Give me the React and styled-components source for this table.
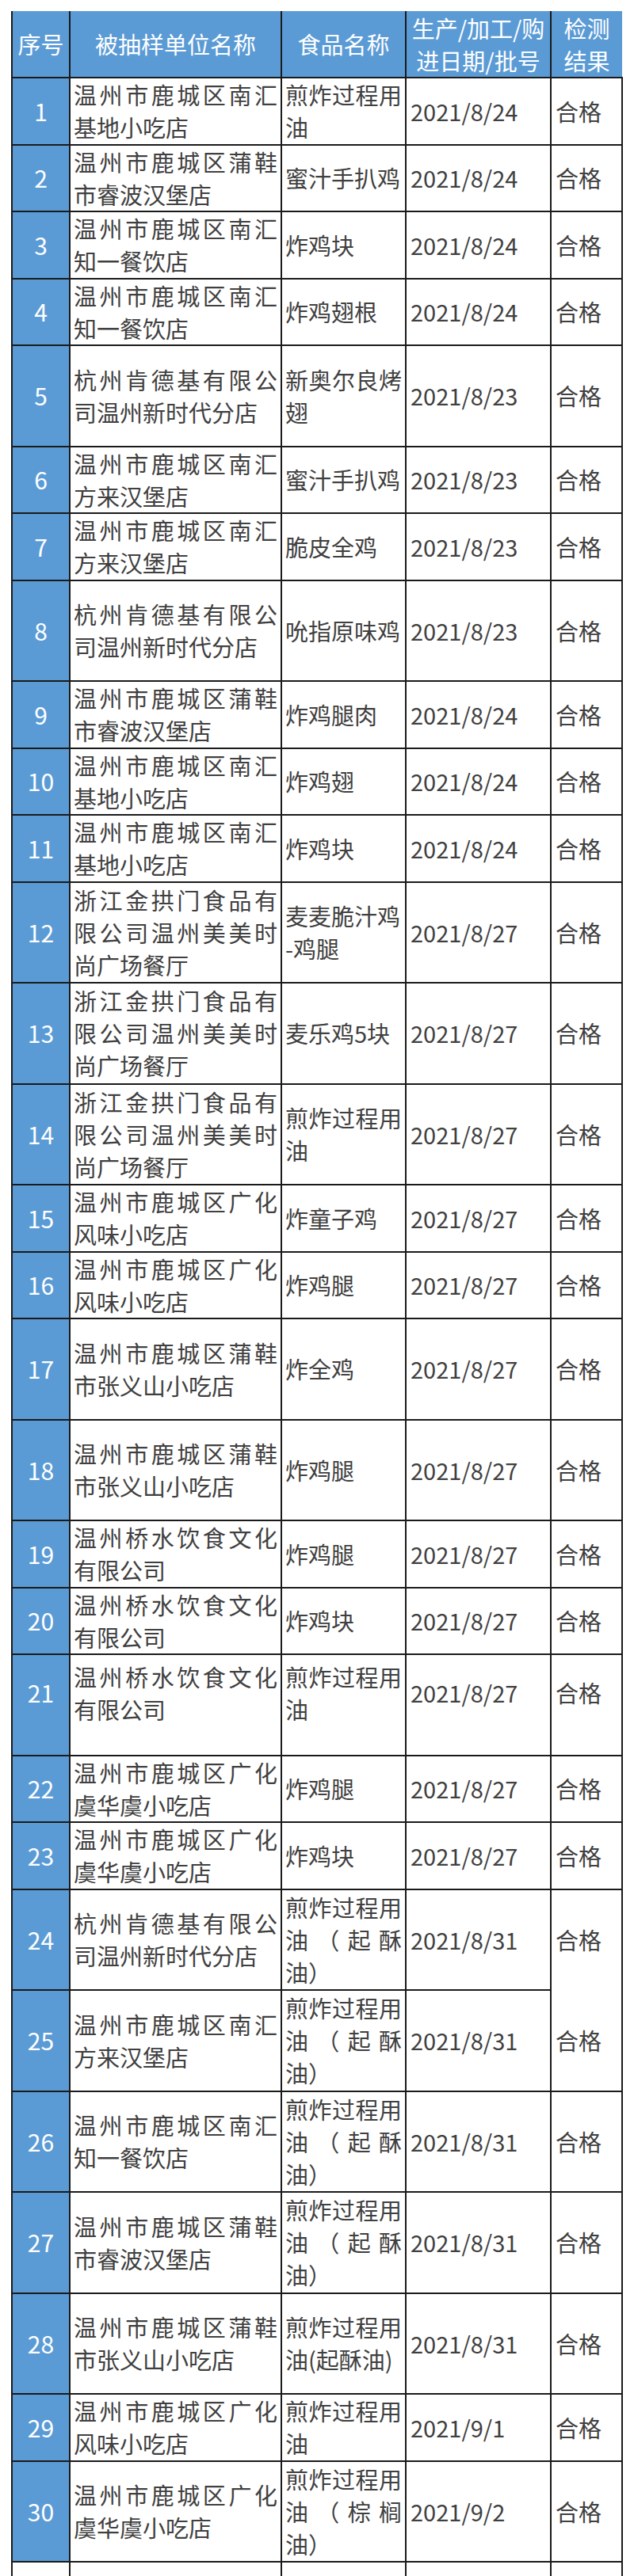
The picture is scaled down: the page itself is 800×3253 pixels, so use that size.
import React from "react";
import styled, { createGlobalStyle } from "styled-components";

const GlobalStyle = createGlobalStyle`
  body {
    margin: 0;
    background: #ffffff;
  }
`;

const LINE = "2px solid #1a1a1a";

const Page = styled.div`
  padding: 14px 0 0 14px;
  font-family: "Noto Sans CJK SC", "Noto Sans", sans-serif;
`;

const Table = styled.table`
  border-collapse: collapse;
  table-layout: fixed;
  width: 772px;
`;

const HeadCell = styled.th`
  background: #5b9bd5;
  color: #ffffff;
  font-weight: 400;
  font-size: 29px;
  line-height: 41px;
  text-align: center;
  vertical-align: middle;
  padding: 0 2px;
  height: 83px;
  border-left: ${LINE};
  border-bottom: ${LINE};
  border-top: none;
  border-right: ${({ $last }) => ($last ? "none" : LINE)};
`;

const Row = styled.tr`
  height: ${({ $tall }) => ($tall ? "127.5px" : "84.5px")};
`;

const Cell = styled.td`
  border: ${LINE};
  border-bottom: ${({ $openBottom }) => ($openBottom ? "none" : LINE)};
  border-top: ${({ $openTop }) => ($openTop ? "none" : LINE)};
  color: #404040;
  font-size: 29px;
  line-height: 41px;
  vertical-align: middle;
  padding: 0 4px 0 5px;
  padding-bottom: ${({ $raised }) => ($raised ? "30px" : "0")};
  word-break: break-all;
`;

const NumCell = styled(Cell)`
  background: #5b9bd5;
  color: #ffffff;
  text-align: center;
  font-size: 30px;
  padding: 0;
  padding-bottom: ${({ $raised }) => ($raised ? "30px" : "0")};
`;

// Excel "distributed" alignment: lines are stretched to the cell width
const TextCell = styled(Cell)`
  text-align: justify;
  text-align-last: left;
  padding: 0 4px 0 4px;
  padding-bottom: ${({ $raised }) => ($raised ? "30px" : "0")};
`;

const DateCell = styled(Cell)`
  white-space: nowrap;
  padding-left: 5px;
`;

const BlankRow = styled.tr`
  height: 40px;
`;

const BlankCell = styled.td`
  border-left: ${LINE};
  border-right: ${LINE};
  border-top: ${LINE};
`;

const CHIPS = "煎炸过程用油（起酥油）";

const rows = [
  ["温州市鹿城区南汇基地小吃店", "煎炸过程用油", "2021/8/24"],
  ["温州市鹿城区蒲鞋市睿波汉堡店", "蜜汁手扒鸡", "2021/8/24"],
  ["温州市鹿城区南汇知一餐饮店", "炸鸡块", "2021/8/24"],
  ["温州市鹿城区南汇知一餐饮店", "炸鸡翅根", "2021/8/24"],
  ["杭州肯德基有限公司温州新时代分店", "新奥尔良烤翅", "2021/8/23", true],
  ["温州市鹿城区南汇方来汉堡店", "蜜汁手扒鸡", "2021/8/23"],
  ["温州市鹿城区南汇方来汉堡店", "脆皮全鸡", "2021/8/23"],
  ["杭州肯德基有限公司温州新时代分店", "吮指原味鸡", "2021/8/23", true],
  ["温州市鹿城区蒲鞋市睿波汉堡店", "炸鸡腿肉", "2021/8/24"],
  ["温州市鹿城区南汇基地小吃店", "炸鸡翅", "2021/8/24"],
  ["温州市鹿城区南汇基地小吃店", "炸鸡块", "2021/8/24"],
  ["浙江金拱门食品有限公司温州美美时尚广场餐厅", ["麦麦脆汁鸡", "-鸡腿"], "2021/8/27", true],
  ["浙江金拱门食品有限公司温州美美时尚广场餐厅", "麦乐鸡5块", "2021/8/27", true],
  ["浙江金拱门食品有限公司温州美美时尚广场餐厅", "煎炸过程用油", "2021/8/27", true],
  ["温州市鹿城区广化风味小吃店", "炸童子鸡", "2021/8/27"],
  ["温州市鹿城区广化风味小吃店", "炸鸡腿", "2021/8/27"],
  ["温州市鹿城区蒲鞋市张义山小吃店", "炸全鸡", "2021/8/27", true],
  ["温州市鹿城区蒲鞋市张义山小吃店", "炸鸡腿", "2021/8/27", true],
  ["温州桥水饮食文化有限公司", "炸鸡腿", "2021/8/27"],
  ["温州桥水饮食文化有限公司", "炸鸡块", "2021/8/27"],
  ["温州桥水饮食文化有限公司", "煎炸过程用油", "2021/8/27", true, true],
  ["温州市鹿城区广化虞华虞小吃店", "炸鸡腿", "2021/8/27"],
  ["温州市鹿城区广化虞华虞小吃店", "炸鸡块", "2021/8/27"],
  ["杭州肯德基有限公司温州新时代分店", CHIPS, "2021/8/31", true],
  ["温州市鹿城区南汇方来汉堡店", CHIPS, "2021/8/31", true],
  ["温州市鹿城区南汇知一餐饮店", CHIPS, "2021/8/31", true],
  ["温州市鹿城区蒲鞋市睿波汉堡店", CHIPS, "2021/8/31", true],
  ["温州市鹿城区蒲鞋市张义山小吃店", "煎炸过程用油(起酥油)", "2021/8/31", true],
  ["温州市鹿城区广化风味小吃店", "煎炸过程用油", "2021/9/1"],
  ["温州市鹿城区广化虞华虞小吃店", "煎炸过程用油（棕榈油）", "2021/9/2", true],
];

const App = () => {
  return (
    <Page lang="zh-CN">
      <GlobalStyle />
      <Table>
        <colgroup>
          <col style={{ width: 73 }} />
          <col style={{ width: 267 }} />
          <col style={{ width: 157 }} />
          <col style={{ width: 183 }} />
          <col style={{ width: 90 }} />
        </colgroup>
        <thead>
          <tr>
            <HeadCell>序号</HeadCell>
            <HeadCell>被抽样单位名称</HeadCell>
            <HeadCell>食品名称</HeadCell>
            <HeadCell>
              生产/加工/购
              <br />
              进日期/批号
            </HeadCell>
            <HeadCell $last>
              检测
              <br />
              结果
            </HeadCell>
          </tr>
        </thead>
        <tbody>
          {rows.map(([unit, food, date, tall, raised], i) => (
            <Row key={i} $tall={tall}>
              <NumCell $raised={raised}>{i + 1}</NumCell>
              <TextCell $raised={raised}>{unit}</TextCell>
              <TextCell $raised={raised}>
                {Array.isArray(food) ? (
                  <>
                    {food[0]}
                    <br />
                    {food[1]}
                  </>
                ) : (
                  food
                )}
              </TextCell>
              <DateCell $raised={raised}>{date}</DateCell>
              {/* rows 24 and 25 share an unbroken result column */}
              <Cell $raised={raised} $openBottom={i === 23} $openTop={i === 24}>
                合格
              </Cell>
            </Row>
          ))}
          <BlankRow>
            <BlankCell />
            <BlankCell />
            <BlankCell />
            <BlankCell />
            <BlankCell />
          </BlankRow>
        </tbody>
      </Table>
    </Page>
  );
};

export default App;
